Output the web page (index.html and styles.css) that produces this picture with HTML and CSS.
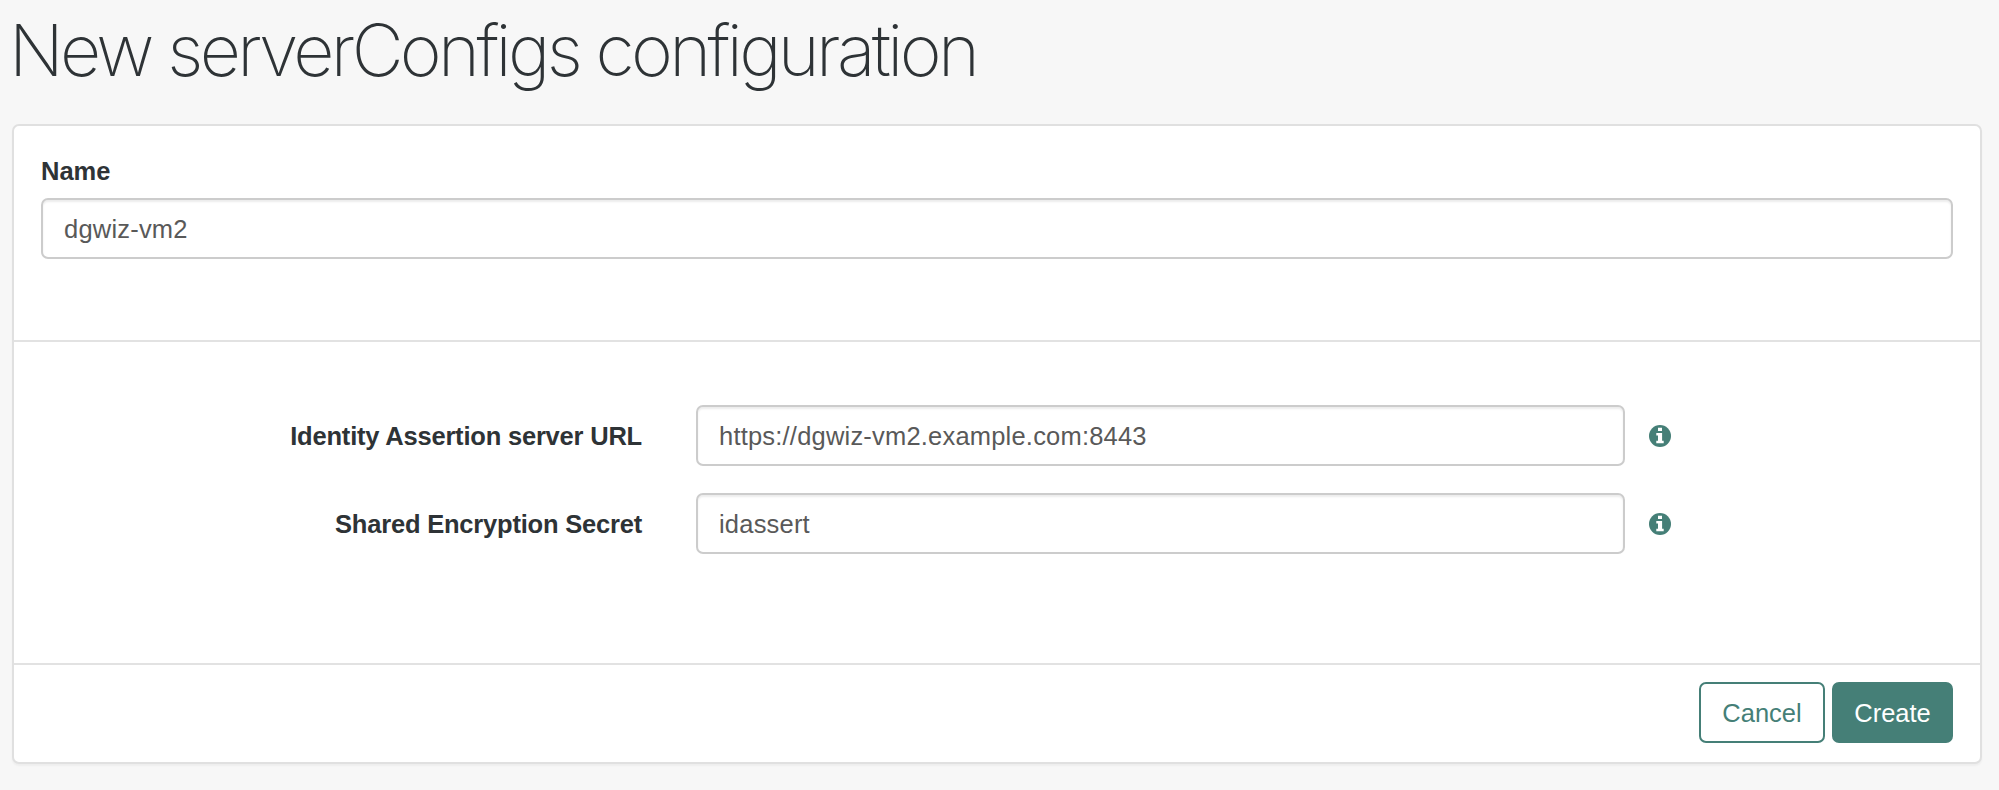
FILE: index.html
```html
<!DOCTYPE html>
<html lang="en">
<head>
<meta charset="utf-8">
<title>New serverConfigs configuration</title>
<link rel="stylesheet" href="styles.css">
</head>
<body>
<h1 class="title">New serverConfigs configuration</h1>
<form class="panel">
  <section class="panel-name">
    <label class="label" for="name"><span>Name</span></label>
    <input class="input" id="name" type="text" value="dgwiz-vm2">
  </section>
  <section class="panel-fields">
    <div class="row">
      <label class="label" for="url"><span>Identity Assertion server URL</span></label>
      <input class="input" id="url" type="text" value="https://dgwiz-vm2.example.com:8443">
      <svg class="info" viewBox="0 0 22 22"><circle cx="11" cy="11" r="11"/><path d="M9 2.8h4v3.1H9zM7.3 7.9h5.8v7.8h1.6v2.6H7.3v-2.6H9v-5.2H7.3z"/></svg>
    </div>
    <div class="row">
      <label class="label" for="secret"><span>Shared Encryption Secret</span></label>
      <input class="input" id="secret" type="text" value="idassert">
      <svg class="info" viewBox="0 0 22 22"><circle cx="11" cy="11" r="11"/><path d="M9 2.8h4v3.1H9zM7.3 7.9h5.8v7.8h1.6v2.6H7.3v-2.6H9v-5.2H7.3z"/></svg>
    </div>
  </section>
  <footer class="panel-footer">
    <button class="btn btn-cancel" type="button">Cancel</button>
    <button class="btn btn-create" type="button">Create</button>
  </footer>
</form>
</body>
</html>
```
FILE: styles.css
```css
* { box-sizing: border-box; }

body {
  margin: 0;
  padding: 0 17px 0 12px;
  height: 790px;
  overflow: hidden;
  background: #f7f7f7;
  color: #2e3336;
  font-family: "Liberation Sans", Arial, sans-serif;
  font-size: 25.5px;
}

.title {
  margin: 0 0 0 -3px;
  height: 124px;
  padding-top: 10px;
  font-family: Inter, sans-serif;
  font-size: 71.5px;
  font-weight: 200;
  line-height: 80px;
  letter-spacing: -3.65px;
  white-space: nowrap;
}

.panel {
  display: flex;
  flex-direction: column;
  height: 640px;
  background: #fff;
  border: 2px solid #e0e0e0;
  border-radius: 7px;
  box-shadow: 0 2px 2px rgba(0, 0, 0, .04);
}

.panel-name {
  display: flex;
  flex-direction: column;
  height: 216px;
  padding: 26px 27px 0;
  border-bottom: 2px solid #e2e2e2;
}

.label {
  font-weight: 700;
  line-height: 38px;
  white-space: nowrap;
}

.panel-name .label { height: 46px; }

.input {
  width: 100%;
  height: 61px;
  padding: 2px 21px 0;
  border: 2px solid #ccc;
  border-radius: 7px;
  box-shadow: inset 0 2px 2px rgba(0, 0, 0, .075);
  background: #fff;
  color: #595959;
  font: inherit;
  letter-spacing: .2px;
  outline: none;
}

.panel-fields {
  display: flex;
  flex-direction: column;
  gap: 27px;
  height: 323px;
  padding-top: 63px;
  border-bottom: 2px solid #e2e2e2;
}

.row {
  display: grid;
  grid-template-columns: 628px 929px 22px;
  align-items: center;
}

.row .label {
  text-align: right;
  letter-spacing: -.2px;
}
.row .input { width: 929px; margin-left: 54px; }
.row .info { margin-left: 78px; }

.info {
  width: 22px;
  height: 22px;
}
.info circle { fill: #457f77; }
.info path { fill: #fff; }

.panel-footer {
  display: flex;
  justify-content: flex-end;
  gap: 7px;
  padding: 17px 27px 0;
}

.btn {
  height: 61px;
  padding: 2px 0 0;
  border: 2px solid #457f77;
  border-radius: 7px;
  font: inherit;
}
.btn-cancel { width: 126px; background: #fff; color: #457f77; }
.btn-create { width: 121px; background: #457f77; color: #fff; }
```
